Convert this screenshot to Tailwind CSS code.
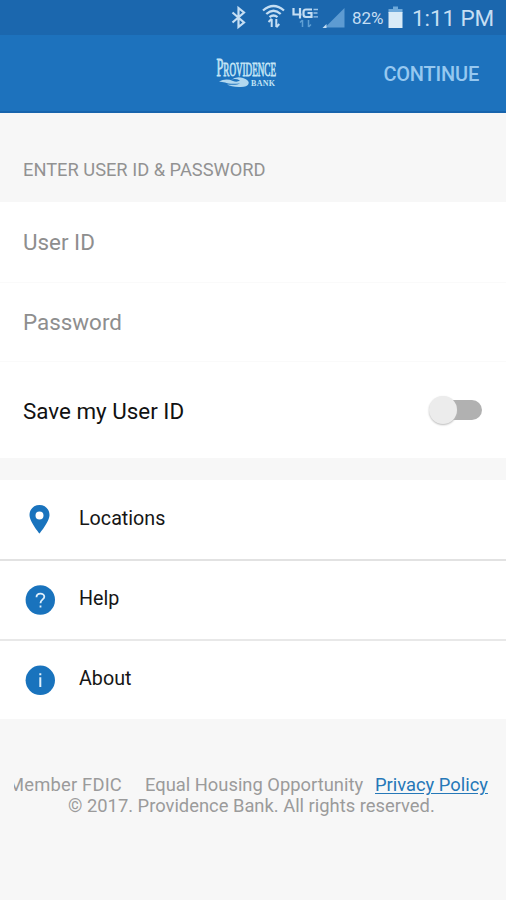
<!DOCTYPE html>
<html lang="en">
<head>
<meta charset="utf-8">
<title>Providence Bank</title>
<script src="https://cdn.jsdelivr.net/npm/@tailwindcss/browser@4"></script>
</head>
<body class="bg-[#f7f7f7]">
<div class="flex h-[900px] w-[506px] flex-col overflow-hidden bg-[#f7f7f7] font-[Roboto,sans-serif] whitespace-nowrap">
  <div class="flex h-[35px] shrink-0 items-center bg-[#1b67ae] pl-[230px] text-[#c5def3]">
    <svg class="h-[35px] w-[118px] shrink-0" viewBox="230 0 118 35" fill="none">
      <path d="M232.500 12.500L244 22.500L238.500 27V8L244 12.500L232.500 22.500" stroke="#c5def3" stroke-width="2.200"/>
      <g stroke="#c5def3" stroke-width="2.300">
        <path d="M263 10.500Q273.500 1.500 284 10.500"/>
        <path d="M266.300 14Q273.500 7.500 280.700 14"/>
        <path d="M269.500 17.200Q273.500 13.800 277.500 17.200"/>
      </g>
      <path d="M271.700 19V27M268.500 22L271.700 18.800M276.300 19V27M279.300 24L276.300 27.200" stroke="#c5def3" stroke-width="2"/>
      <path d="M293.500 8V14.500H301.500M300 8V18.500M312 9.500H306Q303.500 9.500 303.500 12V14.500Q303.500 17 306 17H311.500V13H307.500" stroke="#c5def3" stroke-width="2.200"/>
      <path d="M313.500 9.500H318M313.500 13H317.500M313.500 16.800H318" stroke="#9cc4e8" stroke-width="1.300"/>
      <path d="M302.500 20V27M300 22.500L302.500 20M308.500 20V27M311 24.500L308.500 27" stroke="#5f9fd4" stroke-width="1.500"/>
      <path d="M344.500 8V27.500H325Z" fill="#5d9bd2"/>
      <path d="M326.500 24V28H322.500Z" fill="#c5def3"/>
    </svg>
    <span class="ml-[4px] mt-[2px] w-[35px] text-[17px]">82%</span>
    <svg class="h-[35px] w-[16px] shrink-0" viewBox="387 0 16 35">
      <path d="M393 6.500H398V9H402.500V13H388.500V9H393Z" fill="#6ea9da"/>
      <rect x="388.500" y="12" width="14" height="16" fill="#d9ebf7"/>
    </svg>
    <span class="ml-[9px] mt-[2px] text-[22.500px] tracking-[-0.100px]">1:11 PM</span>
  </div>
  <header class="flex h-[78px] shrink-0 items-center justify-between border-b-2 border-[#1764ad] bg-[#1d72bd] pr-[27px] pl-[214px]">
    <svg class="h-[36px] w-[66px]" viewBox="214 56 66 36" role="img" aria-label="Providence Bank">
      <g fill="#c3e4f5" font-family="Liberation Serif, serif">
        <text x="216.500" y="77" textLength="59.500" lengthAdjust="spacingAndGlyphs" stroke="#c3e4f5" stroke-width=".8"><tspan font-size="25">P</tspan><tspan font-size="18.500">ROVIDENCE</tspan></text>
        <text x="251" y="87" font-size="8" font-weight="bold" textLength="24" lengthAdjust="spacing">BANK</text>
      </g>
      <path d="M219 82.500Q226 79 233 82Q237 83.500 240 81.500Q235 79 231 81Q236 77 243 79Q250 81.500 248.500 85Q247 88.500 239 88Q231 87.500 227 85.500Q237 86.500 240 84.500Q229 85.500 225 83.500Z" fill="#b2d8ef"/>
    </svg>
    <span class="mt-[2px] text-[20px] font-medium tracking-[-0.200px] text-[#96c8f0]">CONTINUE</span>
  </header>
  <main class="flex flex-col">
    <h1 class="flex h-[89px] items-center pt-[24px] pl-[23px] text-[18.300px] text-[#929292]">ENTER USER ID &amp; PASSWORD</h1>
    <section class="bg-white pl-[23px] text-[22.400px]">
      <div class="flex h-[80px] items-center pt-[2px] text-[#8e8e8e]">User ID</div>
      <div class="-ml-[23px] flex h-[80px] items-center border-y border-[#fafafa] pt-[2px] pl-[23px] text-[#8e8e8e]">Password</div>
      <div class="flex h-[96px] items-center pr-[24px] pt-[2px] text-[#111]">
        <span class="mt-[2px]">Save my User ID</span>
        <div class="ml-auto flex h-[28px] w-[53px] items-center pb-[2px]">
          <span class="z-10 h-[28px] w-[28px] rounded-full bg-[#ececec] shadow-[0_1px_2px_#bbb]"></span>
          <span class="-ml-[14px] h-[20px] w-[39px] rounded-full bg-[#b1b1b1]"></span>
        </div>
      </div>
    </section>
    <nav class="mt-[22px] bg-white text-[19.700px] text-[#161616]">
      <a class="flex h-[81px] items-center border-b-2 border-[#e2e2e2] pl-[24px]">
        <svg class="h-[32px] w-[32px]" viewBox="0 0 32 32"><path fill-rule="evenodd" d="M15.500 1C9.800 1 5.500 5.300 5.500 10.900C5.500 17.500 15.500 29.500 15.500 29.500S25.500 17.500 25.500 10.900C25.500 5.300 21.200 1 15.500 1ZM15.500 7.500A4 4 0 1 1 15.500 15.500A4 4 0 1 1 15.500 7.500Z" fill="#1973bd"/></svg>
        <span class="mb-[2px] ml-[23px]">Locations</span>
      </a>
      <a class="flex h-[80px] items-center border-b-2 border-[#e8e8e8] pl-[24px]">
        <svg class="h-[32px] w-[32px]" viewBox="0 0 32 32"><circle cx="16.300" cy="16" r="14.700" fill="#1973bd"/><path d="M12.500 13.200C12.500 8.500 20.300 8.500 20.300 12.800C20.300 15.500 16.500 15.500 16.500 19.300M16.500 21.500V23.500" fill="none" stroke="#e0f0fb" stroke-width="1.800"/></svg>
        <span class="mb-[2px] ml-[23px]">Help</span>
      </a>
      <a class="flex h-[78px] items-center pl-[24px]">
        <svg class="h-[32px] w-[32px]" viewBox="0 0 32 32"><circle cx="16.300" cy="16.300" r="14.700" fill="#1973bd"/><path d="M16.300 9.200V11.200M16.300 13.300V23" fill="none" stroke="#e0f0fb" stroke-width="2"/></svg>
        <span class="mb-[2px] ml-[23px]">About</span>
      </a>
    </nav>
    <footer class="mt-[55px] text-[18.350px] leading-[21px] text-[#9b9b9b]">
      <div class="ml-[14px] flex">
        <span class="flex w-[108px] justify-end overflow-hidden"><span class="-ml-[8px] tracking-[0.200px]">Member FDIC</span></span>
        <span class="ml-[23px] w-[219px]">Equal Housing Opportunity</span>
        <a class="ml-[11px] text-[#2678b8] underline underline-offset-2">Privacy Policy</a>
      </div>
      <div class="pl-[68px]">© 2017. Providence Bank. All rights reserved.</div>
    </footer>
  </main>
</div>
</body>
</html>
